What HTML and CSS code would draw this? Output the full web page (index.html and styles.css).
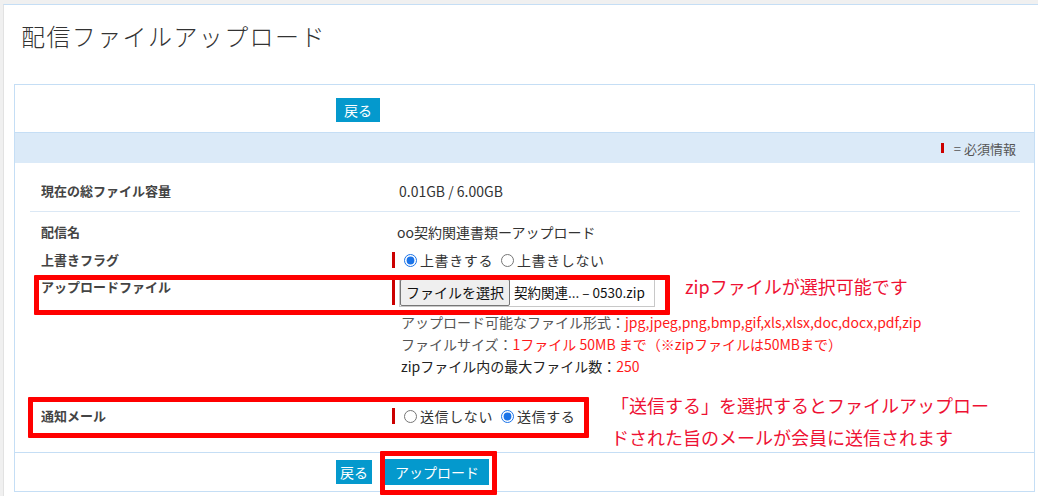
FILE: index.html
```html
<!DOCTYPE html>
<html lang="ja">
<head>
<meta charset="utf-8">
<title>配信ファイルアップロード</title>
<link rel="stylesheet" href="styles.css">
</head>
<body>
<div class="page">
  <h1 class="title">配信ファイルアップロード</h1>
  <div class="box">
    <div class="toprow"><span class="btn btn-back">戻る</span></div>
    <div class="legend"><span class="req-mark"></span>= 必須情報</div>
    <div class="form">
      <div class="row row-total">
        <div class="label">現在の総ファイル容量</div>
        <div class="value">0.01GB / 6.00GB</div>
      </div>
      <div class="row row-name">
        <div class="label">配信名</div>
        <div class="value">oo契約関連書類ーアップロード</div>
      </div>
      <div class="row row-flag">
        <div class="label">上書きフラグ</div>
        <div class="value req">
          <label class="radio"><input type="radio" name="ow" checked>上書きする</label>
          <label class="radio"><input type="radio" name="ow">上書きしない</label>
        </div>
      </div>
      <div class="row row-file">
        <div class="label">アップロードファイル</div>
        <div class="value req">
          <div class="file"><span class="file-btn">ファイルを選択</span><span class="file-name">契約関連... – 0530.zip</span></div>
        </div>
      </div>
      <div class="info">
        <div class="info-line"><span class="muted">アップロード可能なファイル形式：</span><span class="red">jpg,jpeg,png,bmp,gif,xls,xlsx,doc,docx,pdf,zip</span></div>
        <div class="info-line"><span class="muted">ファイルサイズ：</span><span class="red">1ファイル 50MB まで（※zipファイルは50MBまで）</span></div>
        <div class="info-line"><span class="dark">zipファイル内の最大ファイル数：</span><span class="red">250</span></div>
      </div>
      <div class="row row-mail">
        <div class="label">通知メール</div>
        <div class="value req">
          <label class="radio"><input type="radio" name="mail">送信しない</label>
          <label class="radio"><input type="radio" name="mail" checked>送信する</label>
        </div>
      </div>
    </div>
    <div class="bottomrow">
      <span class="btn btn-back2">戻る</span>
      <span class="btn btn-upload">アップロード</span>
    </div>

    <div class="mark mark-file"></div>
    <div class="mark mark-mail"></div>
    <div class="mark mark-upload"></div>
    <div class="note note-zip">zipファイルが選択可能です</div>
    <div class="note note-mail">「送信する」を選択するとファイルアップロー<br>ドされた旨のメールが会員に送信されます</div>
  </div>
</div>
</body>
</html>
```

FILE: styles.css
```css
* { box-sizing: border-box; }
html, body { margin: 0; padding: 0; }
body {
  background: #f0f0f0;
  font-family: "Noto Sans CJK JP", "Noto Sans", sans-serif;
  color: #333;
  width: 1038px;
  height: 496px;
  overflow: hidden;
}
.page {
  margin: 4px 0 0 3px;
  background: #fff;
  border-top: 1px solid #c5def5;
  border-left: 1px solid #e2e2e2;
  padding: 0 3px 0 10px;
  height: 492px;
}
.title {
  margin: 0;
  height: 79px;
  padding: 16px 0 0 7px;
  font-size: 24px;
  font-weight: 300;
  line-height: 30px;
  letter-spacing: 1.4px;
  color: #333;
}
.box {
  position: relative;
  border: 1px solid #c5def5;
  height: 408px;
  display: flex;
  flex-direction: column;
}
.toprow {
  height: 48px;
  border-bottom: 1px solid #c5def5;
  padding: 12px 0 0 321px;
}
.btn {
  display: inline-block;
  background: #0499cd;
  color: #fff;
  font-size: 14px;
  line-height: 24px;
  height: 24px;
  padding: 0 8px;
}
.legend {
  height: 30px;
  background: #dbeaf8;
  display: flex;
  justify-content: flex-end;
  align-items: center;
  padding-right: 18px;
  font-size: 13px;
  color: #555;
}
.req-mark {
  display: inline-block;
  width: 3px;
  height: 10px;
  background: #cc0000;
  margin-right: 10px;
}
.form {
  flex: 1;
  margin: 0 14px 0 15px;
}
.row {
  display: grid;
  grid-template-columns: 362px 1fr;
}
.label {
  padding-left: 11px;
  font-size: 13px;
  font-weight: bold;
  color: #444;
  line-height: 20px;
}
.value {
  font-size: 14px;
  line-height: 20px;
  color: #333;
}
.row-total {
  padding: 18px 0 10px;
  border-bottom: 1px solid #dbe8f5;
}
.row-total .value { padding-left: 7px; }
.row-name {
  height: 34px;
  padding-top: 10px;
}
.row-name .value { padding-left: 5px; }
.row-flag {
  height: 28px;
  align-items: center;
}
.req {
  display: flex;
  align-items: center;
  border-left: 3px solid #cc0000;
}
.row-flag .req, .row-mail .req { height: 16px; }
.radio {
  display: inline-flex;
  align-items: center;
  font-size: 14px;
  letter-spacing: 0.6px;
}
.radio input {
  margin: 0 3px 0 9px;
  width: 13px;
  height: 13px;
  accent-color: #1a73e8;
}
.radio + .radio input { margin-left: 8px; }
.row-file {
  height: 37px;
}
.row-file .label { padding-top: 3px; }
.row-file .req {
  align-self: start;
  margin-top: 5px;
  height: 26px;
}
.file {
  display: flex;
  align-items: center;
  flex-shrink: 0;
  margin-left: 4px;
  width: 256px;
  height: 29px;
  border: 1px solid #c8c8c8;
  background: #fff;
  overflow: hidden;
}
.file-btn {
  flex-shrink: 0;
  display: inline-block;
  height: 27px;
  line-height: 25px;
  padding: 0 5px;
  border: 1px solid #767676;
  border-radius: 2px;
  background: #efefef;
  color: #111;
  font-size: 14px;
  white-space: nowrap;
}
.file-name {
  padding-left: 4px;
  font-size: 13.5px;
  color: #111;
  white-space: nowrap;
}
.info {
  padding-left: 371px;
  font-size: 14px;
  line-height: 22px;
}
.muted { color: #555; }
.dark { color: #222; }
.red { color: #ff1a1a; }
.row-mail {
  margin-top: 19px;
  height: 40px;
  align-items: center;
}
.bottomrow {
  height: 39px;
  border-top: 1px solid #c5def5;
  padding-left: 321px;
  display: flex;
  align-items: center;
  gap: 13px;
}
.btn-back2 { padding: 0 4px; }
.btn-upload { padding: 0 10px; height: 26px; line-height: 26px; }
.mark {
  position: absolute;
  border: 5px solid #ff0000;
  border-radius: 1px;
}
.mark-file { left: 19px; top: 190px; width: 636px; height: 40px; }
.mark-mail { left: 13px; top: 312px; width: 561px; height: 41px; }
.mark-upload { left: 365px; top: 366px; width: 117px; height: 44px; }
.note {
  position: absolute;
  color: #ee1133;
  font-size: 18px;
  white-space: nowrap;
}
.note-zip { left: 670px; top: 189px; line-height: 24px; }
.note-mail { left: 596px; top: 304px; line-height: 32px; }
```
